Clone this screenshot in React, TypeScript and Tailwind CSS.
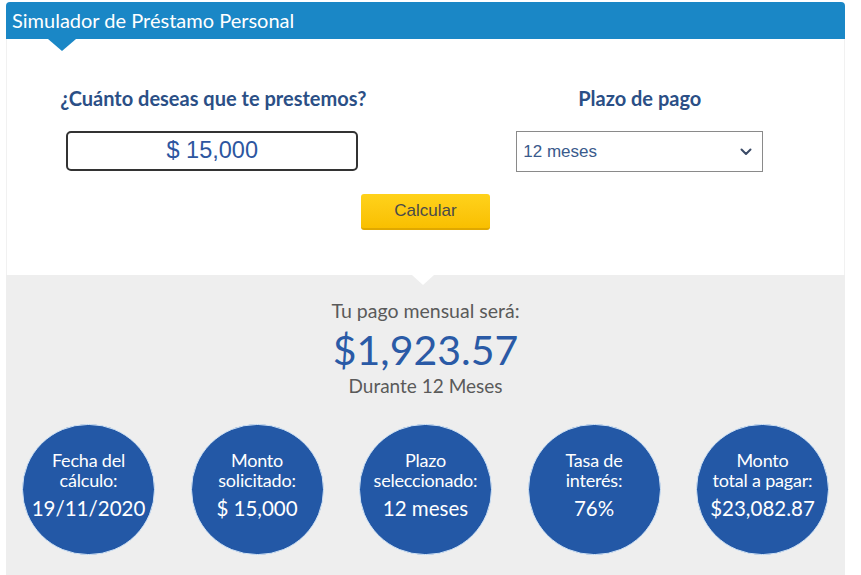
import React from 'react';

const lato = { fontFamily: 'Lato, "Open Sans", sans-serif' };
const arial = { fontFamily: '"Liberation Sans", Arial, sans-serif' };

const stats = [
  { label: ['Fecha del', 'cálculo:'], value: '19/11/2020' },
  { label: ['Monto', 'solicitado:'], value: '$ 15,000' },
  { label: ['Plazo', 'seleccionado:'], value: '12 meses' },
  { label: ['Tasa de', 'interés:'], value: '76%' },
  { label: ['Monto', 'total a pagar:'], value: '$23,082.87' },
];

function StatCircle({ label, value }: { label: string[]; value: string }) {
  return (
    <div className="flex h-[131px] w-[133px] flex-col items-center justify-center rounded-full border border-[#cfe2f5] bg-[#2358a6] pb-[10px] text-white">
      <div className="text-[18px] leading-[20px] tracking-[-0.2px]">
        {label.map((l) => (
          <div key={l} className="text-center whitespace-nowrap">{l}</div>
        ))}
      </div>
      <div className="mt-[6px] whitespace-nowrap text-[20.5px] leading-[24px]">{value}</div>
    </div>
  );
}

export default function App() {
  return (
    <div className="min-h-[575px] bg-white pt-[2px]" style={lato}>
      <div className="ml-[6px] w-[839px]">
        <header className="relative h-[37px] rounded-t-[4px] bg-[#1a87c6] pl-[6px] pt-[6px] text-[20px] leading-[24px] text-white">
          Simulador de Préstamo Personal
          <span className="absolute left-[42px] top-[37px] h-0 w-0 border-x-[14px] border-t-[12px] border-x-transparent border-t-[#1a87c6]" />
        </header>

        <section className="border-x border-[#f1f1f1] bg-white pb-[45px] pt-[47px]">
          <div className="grid grid-cols-2">
            <div className="flex flex-col items-center pr-[6px]">
              <h2 className="text-[20px] font-bold leading-[24px] text-[#2b4f86]">¿Cuánto deseas que te prestemos?</h2>
              <div
                className="ml-[-2px] mt-[21px] flex h-[40px] w-[292px] items-center justify-center rounded-[5px] border-2 border-[#333] text-[23.5px] text-[#2d56a0]"
                style={arial}
              >
                $ 15,000
              </div>
            </div>
            <div className="flex flex-col items-center pl-[10px]">
              <h2 className="text-[20px] font-bold leading-[24px] text-[#2b4f86]">Plazo de pago</h2>
              <div
                className="mt-[21px] flex h-[41px] w-[247px] items-center justify-between border border-[#8a8a8a] pl-[6px] pr-[10px] text-[17px] text-[#3a5a8c]"
                style={arial}
              >
                <span>12 meses</span>
                <svg width="12" height="8" viewBox="0 0 12 8" fill="none">
                  <path d="M1.5 1.5 6 6l4.5-4.5" stroke="#3a4a66" strokeWidth="2" strokeLinecap="round" strokeLinejoin="round" />
                </svg>
              </div>
            </div>
          </div>
          <div className="mt-[22px] flex justify-center">
            <button
              className="h-[36px] w-[129px] rounded-[3px] border-b-2 border-[#e0a800] bg-gradient-to-b from-[#ffd21a] to-[#f9bf00] text-[17px] text-[#4a4a4a]"
              style={arial}
            >
              Calcular
            </button>
          </div>
        </section>

        <section className="relative flex h-[301px] flex-col items-center bg-[#eeeeee] pt-[24px]">
          <span className="absolute left-[406px] top-0 h-0 w-0 border-x-[11px] border-t-[10px] border-x-transparent border-t-white" />
          <div className="text-[19.5px] leading-[24px] text-[#5a5a5a]">Tu pago mensual será:</div>
          <div className="mt-[3px] text-[41px] leading-[48px] text-[#2a5aa6]">$1,923.57</div>
          <div className="text-[19px] leading-[24px] text-[#5a5a5a]">Durante 12 Meses</div>
          <div className="mt-[26px] flex w-full justify-between px-[16px]">
            {stats.map((s) => (
              <StatCircle key={s.value} label={s.label} value={s.value} />
            ))}
          </div>
        </section>
      </div>
    </div>
  );
}
